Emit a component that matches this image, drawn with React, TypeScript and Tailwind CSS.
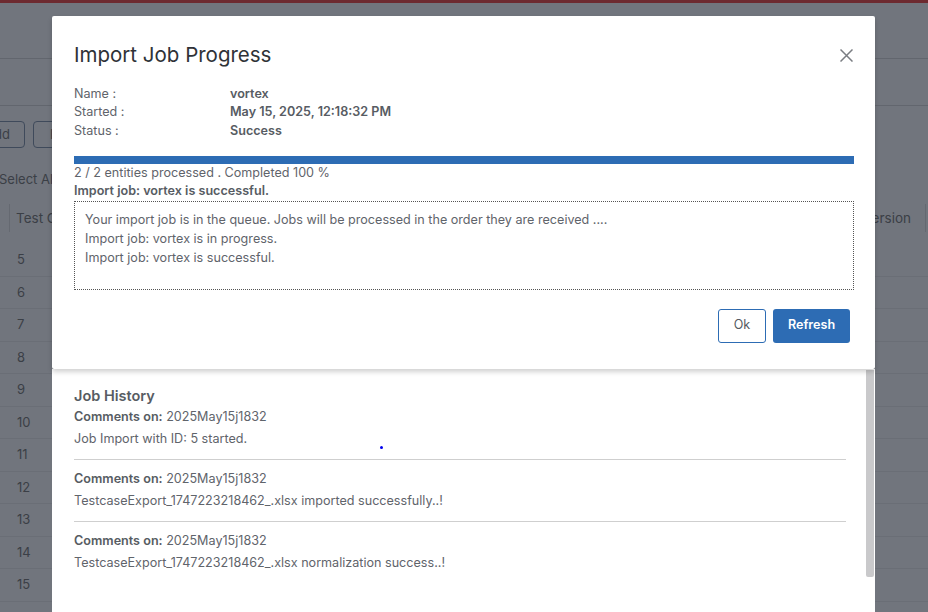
import React from "react";

const rows = [5, 6, 7, 8, 9, 10, 11, 12, 13, 14, 15];

const history = [
  { on: "2025May15j1832", text: "Job Import with ID: 5 started." },
  { on: "2025May15j1832", text: "TestcaseExport_1747223218462_.xlsx imported successfully..!" },
  { on: "2025May15j1832", text: "TestcaseExport_1747223218462_.xlsx normalization success..!" },
];

export default function App() {
  return (
    <div className="relative h-[612px] w-[928px] overflow-hidden bg-[#71757d] font-['Inter',sans-serif] text-[#3b3f46]">
      {/* background page (dimmed) */}
      <div className="h-[3px] bg-[#6d2a30]" />
      <div className="h-[56px] border-b border-[#62666e]" />
      <div className="h-[47px] border-b border-[#62666e]" />
      <div className="ml-[-35px] flex gap-[8px] pt-[15px]">
        <div className="flex h-[27px] w-[60px] items-center justify-end rounded-[4px] border border-[#3f4a5b] pr-[14px] text-[13px]">
          Add
        </div>
        <div className="flex h-[27px] items-center rounded-[4px] border border-[#3f4a5b] px-[16px] text-[13px]">
          Import
        </div>
      </div>
      <div className="ml-[-1px] mt-[21px] h-[20px] text-[13px] leading-[20px]">Select All</div>
      <div className="mt-[15px] flex h-[28px] items-center">
        <div className="h-[28px] w-[10px] border-r border-[#656971]" />
        <div className="pl-[6px] text-[13.5px]">Test Case</div>
        <div className="ml-auto mr-[2px] flex h-[28px] items-center border-r border-[#656971] pr-[14px] text-[13.5px]">
          Version
        </div>
      </div>
      <div className="mt-[12px]">
        {rows.map((r) => (
          <div
            key={r}
            className="flex h-[32.5px] items-center border-b border-[#6a6e76] pl-[17px] text-[13px]"
          >
            {r}
          </div>
        ))}
      </div>

      {/* modal stack */}
      <div className="absolute left-[52px] top-[16px] w-[823px] text-[#5f646b]">
        {/* job progress dialog */}
        <div className="relative z-10 rounded-[2px] bg-white pl-[22px] pr-[21px] pb-[26px] pt-[26px] shadow-[0_3px_5px_rgba(0,0,0,0.18)]">
          <div className="flex items-center justify-between">
            <h1 className="text-[20.5px] leading-[26px] text-[#2f3237]">Import Job Progress</h1>
            <button className="mr-[1px] flex h-[16px] w-[14px] items-center justify-center text-[#7a7d82]">
              <svg width="13" height="13" viewBox="0 0 13 13" fill="none" stroke="currentColor" strokeWidth="1.5">
                <path d="M0.5 0.5L12.5 12.5M12.5 0.5L0.5 12.5" />
              </svg>
            </button>
          </div>

          <div className="mt-[16.5px] grid grid-cols-[156px_1fr] text-[12.6px] leading-[18.5px]">
            <div>Name :</div>
            <div className="font-semibold text-[#575c63]">vortex</div>
            <div>Started :</div>
            <div className="font-semibold text-[#575c63]">May 15, 2025, 12:18:32 PM</div>
            <div>Status :</div>
            <div className="font-semibold text-[#575c63]">Success</div>
          </div>

          <div className="mt-[15.5px] h-[8px] w-full bg-[#2d6cb4]" />
          <div className="text-[12.6px] leading-[18px]">2 / 2 entities processed . Completed 100 %</div>
          <div className="text-[12.6px] font-semibold leading-[18px] text-[#575c63]">
            Import job: vortex is successful.
          </div>

          <div className="mt-[1px] h-[89px] border border-dotted border-[#555] pl-[10px] pt-[8px] text-[12.6px] leading-[19px]">
            <div>Your import job is in the queue. Jobs will be processed in the order they are received ....</div>
            <div>Import job: vortex is in progress.</div>
            <div>Import job: vortex is successful.</div>
          </div>

          <div className="mt-[19px] flex justify-end gap-[7px] pr-[4px]">
            <button className="h-[34px] w-[48px] rounded-[3px] border border-[#2d6cb4] bg-white text-[12.6px] text-[#555a61]">
              Ok
            </button>
            <button className="h-[34px] w-[77px] rounded-[3px] bg-[#2d6cb4] text-[12.6px] font-semibold text-white">
              Refresh
            </button>
          </div>
        </div>

        {/* job history panel */}
        <div className="relative h-[260px] bg-white pl-[22px] pr-[29px] pt-[17px]">
          <div className="absolute right-[1px] top-[1px] h-[207px] w-[8px] rounded-b-[2px] bg-[#c9c9cb]" />
          <div className="absolute left-[328px] top-[77px] h-[3px] w-[3px] rounded-full bg-[#0000ee]" />
          <h2 className="text-[14.5px] font-semibold leading-[20px] text-[#575c63]">Job History</h2>
          {history.map((h, i) => (
            <div
              key={i}
              className={`pb-[11px] ${i === 0 ? "pt-[2px]" : "pt-[10px]"} ${
                i < history.length - 1 ? "border-b border-[#cfcfcf]" : ""
              }`}
            >
              <div className="text-[12.6px] leading-[18px]">
                <span className="font-semibold text-[#575c63]">Comments on:</span> {h.on}
              </div>
              <div className="mt-[4px] text-[12.6px] leading-[18px]">{h.text}</div>
            </div>
          ))}
        </div>
      </div>
    </div>
  );
}
